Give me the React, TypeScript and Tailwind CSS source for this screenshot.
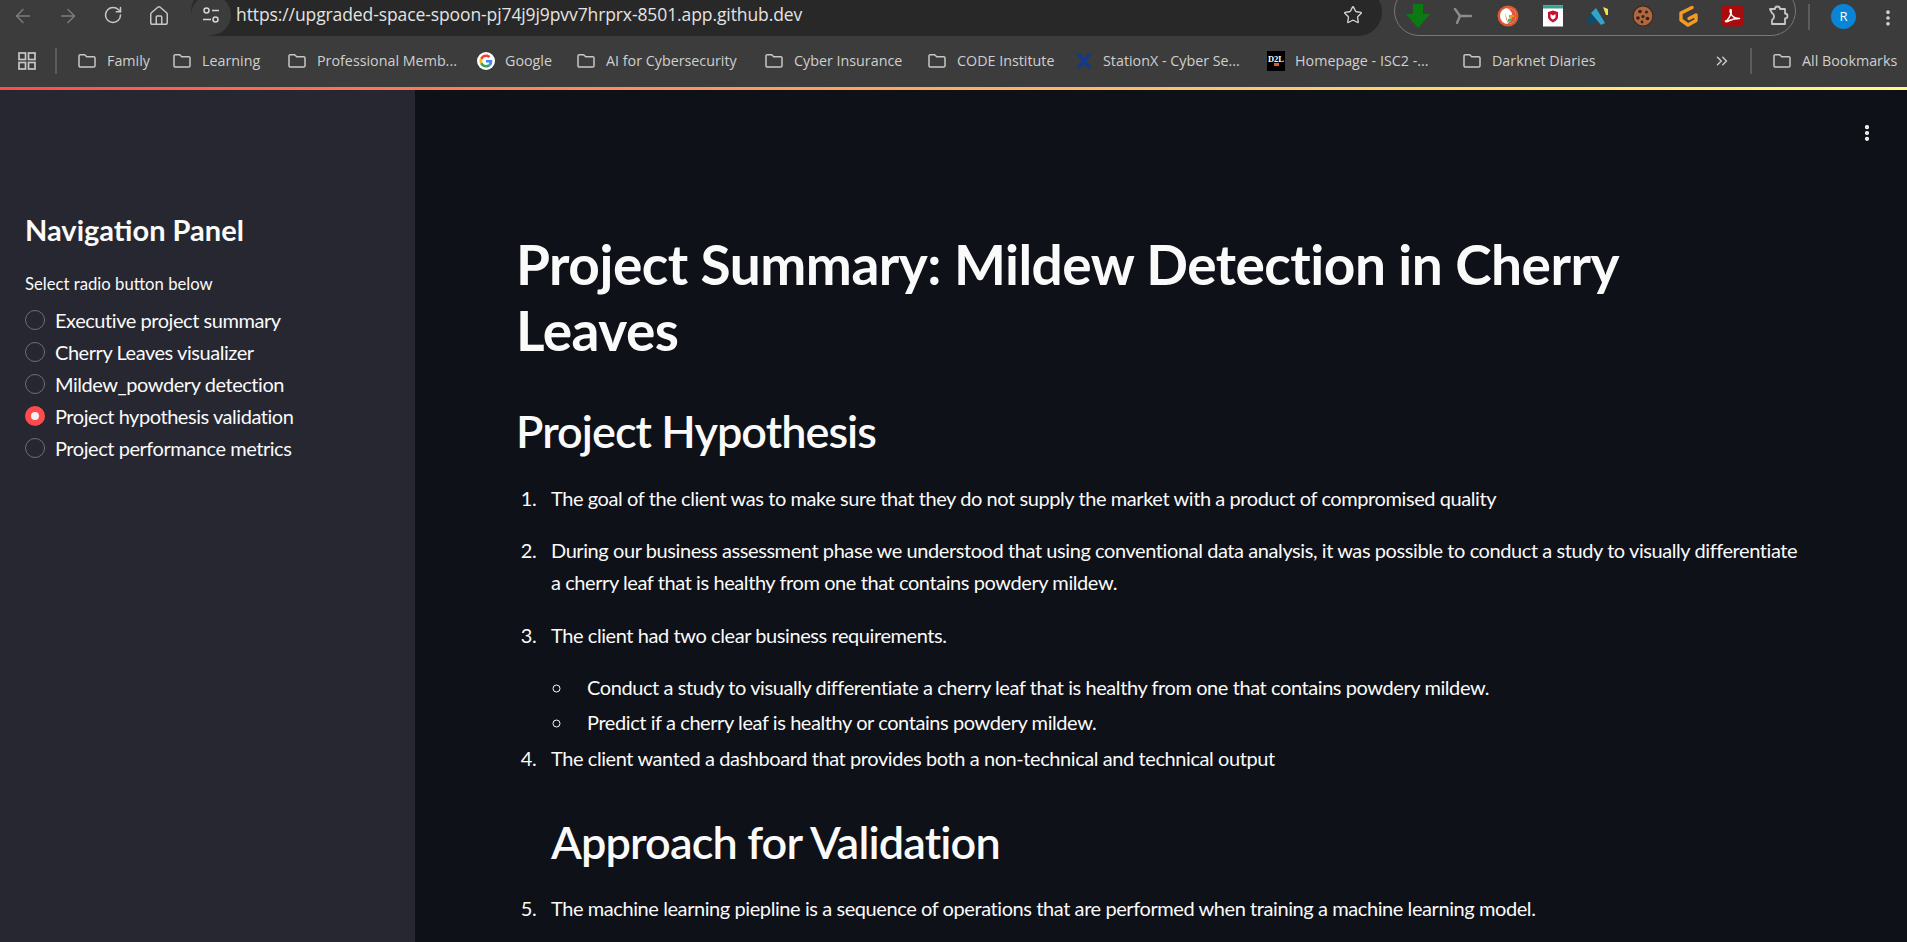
import { ArrowLeft, ArrowRight, RotateCw, House, Star, ChevronsRight, EllipsisVertical } from 'lucide-react'

const FolderIcon = () => (
  <svg width="20" height="20" viewBox="0 0 20 20" fill="none" stroke="#c7c7c7" strokeWidth="1.5" strokeLinejoin="round">
    <path d="M2 5a1.3 1.3 0 0 1 1.3-1.3h4.4l2 2h7A1.3 1.3 0 0 1 18 7v7.7a1.3 1.3 0 0 1-1.3 1.3H3.3A1.3 1.3 0 0 1 2 14.7z" />
  </svg>
)

const GoogleIcon = () => (
  <svg width="18" height="20" viewBox="0 0 48 53">
    <circle cx="24" cy="26.500" r="24" fill="#fff" />
    <g transform="translate(6.5 9) scale(0.73)">
      <path fill="#EA4335" d="M24 9.5c3.5 0 6.7 1.2 9.2 3.6l6.9-6.9C35.9 2.4 30.5 0 24 0 14.6 0 6.5 5.4 2.6 13.2l8 6.2C12.5 13.7 17.8 9.5 24 9.5z" />
      <path fill="#4285F4" d="M46.9 24.5c0-1.6-.1-3.1-.4-4.5H24v9h12.9c-.6 3-2.2 5.5-4.7 7.2l7.7 6c4.5-4.2 7-10.3 7-17.7z" />
      <path fill="#FBBC05" d="M10.5 28.6c-.5-1.4-.8-3-.8-4.6s.3-3.2.8-4.6l-8-6.2C.9 16.5 0 20.1 0 24s.9 7.5 2.6 10.8l7.9-6.2z" />
      <path fill="#34A853" d="M24 48c6.5 0 11.9-2.1 15.9-5.8l-7.7-6c-2.2 1.4-4.9 2.3-8.2 2.3-6.2 0-11.5-4.2-13.4-9.9l-8 6.2C6.5 42.6 14.6 48 24 48z" />
    </g>
  </svg>
)

const StationXIcon = () => (
  <svg width="18" height="20" viewBox="0 0 20 20">
    <path fill="#123a8c" d="M1 2h5l4 5 4-5h5l-6.5 8L19 18h-5l-4-5-4 5H1l6.5-8z" />
  </svg>
)

const D2LIcon = () => (
  <div className="relative flex h-[20px] w-[18px] items-start justify-center bg-black pt-[3px] font-['Liberation_Serif',serif] text-[8.5px] leading-[11px] font-bold text-white">
    D2L
    <span className="absolute bottom-[5px] left-[7px] h-[3px] w-[5px] bg-[#d8622a]" />
  </div>
)

const extensions = [
  <svg key="dl" width="26" height="26" viewBox="0 0 26 26"><path fill="#0b7a12" d="M8 1h10v10h7L13 25 1 11h7z" /></svg>,
  <svg key="cut" width="20" height="20" viewBox="0 0 20 20" fill="none" stroke="#8c8c8c" strokeWidth="2.4" strokeLinecap="round"><path d="M2 3l5 7 11 0M7 10l-3 7" /></svg>,
  <svg key="ddg" width="22" height="22" viewBox="0 0 22 22">
    <circle cx="11" cy="11" r="10.5" fill="#de5833" />
    <circle cx="11" cy="11" r="8" fill="#fff" />
    <path fill="#de5833" d="M11 3a8 8 0 0 1 0 16c-1-3-3-7-2.500-11 .3-2 1.500-3 2.500-5z" />
    <path fill="#fff" d="M7 4h5l3 4-1 8-3 2z" />
    <path fill="#f7941d" d="M12 10h5v2l-5 1z" />
    <path fill="#4caf50" d="M11 14l4-1v3l-4 1z" />
  </svg>,
  <svg key="mc" width="22" height="22" viewBox="0 0 22 22">
    <rect width="20" height="21" x="1" y="0.500" fill="#fff" />
    <rect width="20" height="3" x="1" y="0.500" fill="#3a9f8c" />
    <path fill="#c8102e" d="M6 7l5-1.500L16 7v5c0 2.500-3 4.500-5 5.500-2-1-5-3-5-5.500zm2.500 2v3c0 1 1.500 2 2.500 2.700 1-.7 2.500-1.700 2.500-2.700V9L11 10.500z" />
  </svg>,
  <svg key="n" width="24" height="24" viewBox="0 0 24 24">
    <path fill="#0f4c6b" d="M1 14l6-6 2 4v7H1z" />
    <path fill="#2fa6c9" d="M5 9l5-5 9 15-4 2z" />
    <path fill="#f4e04d" d="M17 3l5 2v6h-2z" />
  </svg>,
  <svg key="cookie" width="22" height="22" viewBox="0 0 22 22">
    <circle cx="11" cy="11" r="10" fill="#b0673f" stroke="#3a2a22" strokeWidth="1.200" />
    <circle cx="8" cy="6.500" r="1.800" fill="#33211a" />
    <circle cx="14.500" cy="7" r="1.500" fill="#33211a" />
    <circle cx="11" cy="11.500" r="1.500" fill="#33211a" />
    <circle cx="6" cy="13" r="1.800" fill="#33211a" />
    <circle cx="15.500" cy="13.500" r="1.800" fill="#33211a" />
    <circle cx="10" cy="17" r="1.400" fill="#33211a" />
  </svg>,
  <svg key="gp" width="22" height="24" viewBox="0 0 22 24" fill="none" stroke="#f59a23" strokeWidth="3.400" strokeLinejoin="round" strokeLinecap="round">
    <path d="M15 3.500L4 9v7l7 5 8-4.500V11l-7 3.500" />
  </svg>,
  <svg key="pdf" width="21" height="22" viewBox="0 0 21 22">
    <rect width="21" height="21" y="0.500" rx="2.500" fill="#a80c0c" />
    <path fill="none" stroke="#fff" strokeWidth="1.500" strokeLinejoin="round" d="M3.500 16.500c2-1 4-4 5.500-8 .5-1.500.3-4-.3-4-.8 0-.8 2.500.3 4.500 1.500 3 4 4.500 8.500 4.500-3 0-8 1-10 2-2 1-3 2-4 .5z" />
  </svg>,
  <svg key="puzzle" width="24" height="24" viewBox="0 0 24 24" fill="none" stroke="#c7c7c7" strokeWidth="1.800" strokeLinejoin="round">
    <path d="M4 5h5a2.500 2.500 0 0 1 5 0h5v4.500a2.500 2.500 0 0 1 0 5V20H6v-4a4 4 0 0 0 0-7z" />
  </svg>,
]

const bookmarks = [
  { label: 'Family', width: 'w-[95px]', icon: <FolderIcon /> },
  { label: 'Learning', width: 'w-[115px]', icon: <FolderIcon /> },
  { label: 'Professional Memb...', width: 'w-[190px]', icon: <FolderIcon /> },
  { label: 'Google', width: 'w-[99px]', icon: <GoogleIcon /> },
  { label: 'AI for Cybersecurity', width: 'w-[188px]', icon: <FolderIcon /> },
  { label: 'Cyber Insurance', width: 'w-[163px]', icon: <FolderIcon /> },
  { label: 'CODE Institute', width: 'w-[148px]', icon: <FolderIcon /> },
  { label: 'StationX - Cyber Se...', width: 'w-[192px]', icon: <StationXIcon /> },
  { label: 'Homepage - ISC2 -...', width: 'w-[195px]', icon: <D2LIcon /> },
  { label: 'Darknet Diaries', width: 'w-[252px]', icon: <FolderIcon /> },
]

const navItems = [
  'Executive project summary',
  'Cherry Leaves visualizer',
  'Mildew_powdery detection',
  'Project hypothesis validation',
  'Project performance metrics',
]

const BrowserChrome = () => (
  <div className="h-[87px] bg-[#3c3c3c] font-['Open_Sans',sans-serif]">
    {/* Top toolbar */}
    <div className="flex h-[36px] items-end overflow-hidden">
      <div className="flex h-[36px] w-[191px] shrink-0 items-start pt-[5px] pl-[12px]">
        <ArrowLeft className="h-[22px] w-[22px] text-[#7c7c7c]" strokeWidth={1.6} />
        <ArrowRight className="ml-[23px] h-[22px] w-[22px] text-[#7c7c7c]" strokeWidth={1.6} />
        <RotateCw className="ml-[24px] h-[20px] w-[20px] text-[#c7c7c7]" strokeWidth={1.8} />
        <House className="ml-[25px] h-[22px] w-[22px] text-[#c7c7c7]" strokeWidth={1.6} />
      </div>
      <div className="flex h-[48px] w-[1191px] shrink-0 items-center rounded-full bg-[#282828] pt-[6px] text-[#e3e3e3]">
        <div className="flex h-[40px] w-[40px] items-center justify-center rounded-full bg-[#3c3c3c]">
          <svg width="20" height="20" viewBox="0 0 20 20" fill="none" stroke="#d5d5d5" strokeWidth="1.500">
            <circle cx="5.500" cy="5.500" r="2.500" />
            <path d="M11 5.500h7M2 14.500h8" />
            <circle cx="14.500" cy="14.500" r="2.500" />
          </svg>
        </div>
        <span className="ml-[5px] text-[17.500px] leading-none tracking-[-0.1px]">https://upgraded-space-spoon-pj74j9j9pvv7hrprx-8501.app.github.dev</span>
        <Star className="mr-[19px] ml-auto h-[20px] w-[20px] text-[#d5d5d5]" strokeWidth={1.6} />
      </div>
      <div className="ml-[12px] flex h-[50px] w-[402px] shrink-0 items-center rounded-full border border-[#777] pt-[10px]">
        {extensions.map((icon) => (
          <div key={icon.key} className="flex w-[45px] shrink-0 justify-center">{icon}</div>
        ))}
      </div>
      <div className="mb-[6px] ml-[12px] h-[26px] w-[2px] bg-[#5c5c5c]" />
      <div className="mb-[7px] ml-[21px] flex h-[25px] w-[25px] items-center justify-center rounded-full bg-[#0a84d6] text-[13px] text-white">R</div>
      <EllipsisVertical className="mb-[8px] ml-[22px] h-[20px] w-[20px] text-[#d5d5d5]" strokeWidth={2.4} />
    </div>

    {/* Bookmarks bar */}
    <div className="flex h-[51px] items-center pb-[2px] text-[14.300px] text-[#cfcfcf]">
      <div className="flex w-[77px] shrink-0 items-center pl-[18px]">
        <svg width="18" height="18" viewBox="0 0 18 18" fill="none" stroke="#c7c7c7" strokeWidth="1.700">
          <rect x="1" y="1" width="6.500" height="6.500" />
          <rect x="10.500" y="1" width="6.500" height="6.500" />
          <rect x="1" y="10.500" width="6.500" height="6.500" />
          <rect x="10.500" y="10.500" width="6.500" height="6.500" />
        </svg>
        <div className="ml-[19px] h-[26px] w-[2px] bg-[#5c5c5c]" />
      </div>
      {bookmarks.map((b) => (
        <div key={b.label} className={`flex shrink-0 items-center gap-[10px] whitespace-nowrap ${b.width}`}>
          {b.icon}
          <span>{b.label}</span>
        </div>
      ))}
      <ChevronsRight className="ml-[-1px] h-[18px] w-[18px] text-[#c7c7c7]" />
      <div className="ml-[19px] h-[26px] w-[2px] bg-[#5c5c5c]" />
      <div className="ml-[20px] flex shrink-0 items-center gap-[10px] whitespace-nowrap">
        <FolderIcon />
        <span>All Bookmarks</span>
      </div>
    </div>
  </div>
)

const Sidebar = () => (
  <aside className="h-full w-[415px] shrink-0 bg-[#262730] pt-[119px] pl-[25px] text-[#fafafa]">
    <h2 className="text-[29px] leading-[42px] font-bold">Navigation Panel</h2>
    <p className="mt-[19px] text-[16.700px] leading-[28px]">Select radio button below</p>
    <div className="mt-[6px] flex flex-col">
      {navItems.map((item, i) => (
        <label key={item} className="flex h-[32px] items-center gap-[10px] text-[20px] tracking-[-0.45px]">
          {i === 3 ? (
            <span className="flex h-[20px] w-[20px] items-center justify-center rounded-full bg-[#ff4b4b]">
              <span className="h-[8px] w-[8px] rounded-full bg-[#f0f2f6]" />
            </span>
          ) : (
            <span className="h-[20px] w-[20px] rounded-full border border-[#6b6c75]" />
          )}
          <span>{item}</span>
        </label>
      ))}
    </div>
  </aside>
)

const Content = () => (
  <main className="relative h-full min-w-0 flex-1 overflow-hidden bg-[#0e1117] pt-[141px] pl-[101px] text-[#fafafa]">
    <EllipsisVertical className="absolute top-[33px] right-[30px] h-[20px] w-[20px] text-white" strokeWidth={3} />
    <h1 className="text-[55px] leading-[66px] font-bold tracking-[-0.5px]">
      Project Summary: Mildew Detection in Cherry
      <br />
      Leaves
    </h1>
    <h2 className="mt-[41px] text-[45px] leading-[54px] font-semibold tracking-[-0.95px]">Project Hypothesis</h2>
    <ol className="mt-[24px] list-decimal pl-[25px] text-[20px] leading-[32px] tracking-[-0.42px] [&>li]:pl-[10px]">
      <li className="mb-[20px]">The goal of the client was to make sure that they do not supply the market with a product of compromised quality</li>
      <li className="mb-[21px]">
        During our business assessment phase we understood that using conventional data analysis, it was possible to conduct a study to visually differentiate
        <br />
        a cherry leaf that is healthy from one that contains powdery mildew.
      </li>
      <li>
        The client had two clear business requirements.
        <ul className="mt-[20px] list-[circle] pl-[22px] [&>li]:pl-[14px]">
          <li className="mb-[3px]">Conduct a study to visually differentiate a cherry leaf that is healthy from one that contains powdery mildew.</li>
          <li>Predict if a cherry leaf is healthy or contains powdery mildew.</li>
        </ul>
      </li>
      <li className="mt-[4px]">
        The client wanted a dashboard that provides both a non-technical and technical output
        <h2 className="mt-[41px] mb-[23px] text-[45px] leading-[54px] font-semibold tracking-[-0.85px]">Approach for Validation</h2>
      </li>
      <li>The machine learning piepline is a sequence of operations that are performed when training a machine learning model.</li>
    </ol>
  </main>
)

export default function App() {
  return (
    <div className="flex h-[942px] w-[1907px] flex-col overflow-hidden bg-[#0e1117] font-[Lato,sans-serif]">
      <BrowserChrome />
      <div className="h-[3px] bg-gradient-to-r from-[#ff4b4b] to-[#fffd80]" />
      <div className="flex min-h-0 flex-1">
        <Sidebar />
        <Content />
      </div>
    </div>
  )
}
